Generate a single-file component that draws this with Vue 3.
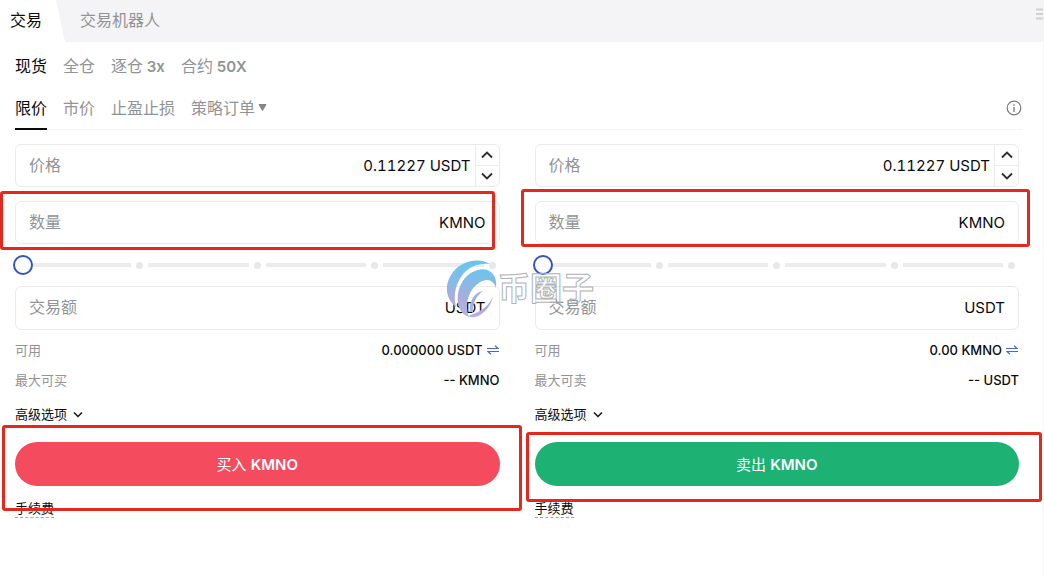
<script setup>
import { ref } from 'vue'

const panels = [
  { id: 'buy', available: '0.000000 USDT', maxLabel: '最大可买', max: '-- KMNO', action: '买入' },
  { id: 'sell', available: '0.00 KMNO', maxLabel: '最大可卖', max: '-- USDT', action: '卖出' },
]
const markets = [
  { name: '现货' },
  { name: '全仓' },
  { name: '逐仓', level: '3x' },
  { name: '合约', level: '50X' },
]
const orders = ['限价', '市价', '止盈止损']
const prices = ref({ buy: '0.11227', sell: '0.11227' })
const ratio = ref({ buy: 0, sell: 0 })
</script>

<template>
  <div class="page">
    <header class="topbar">
      <button class="top-tab current">交易</button>
      <svg class="slant" viewBox="0 0 10 42" aria-hidden="true"><path d="M0 0 8 38Q9 41 10 42H0Z" fill="#fff" /></svg>
      <button class="top-tab">交易机器人</button>
      <svg class="grip" viewBox="0 0 7 12" aria-hidden="true"><path d="M0 1.500h7M0 6h7M0 10.500h7" stroke="#d0d1d4" stroke-width="2" /></svg>
    </header>

    <main class="body">
      <nav class="markets">
        <button v-for="(m, i) in markets" :key="m.name" class="link" :class="{ on: i === 0 }">{{ m.name }}<b v-if="m.level">&nbsp;{{ m.level }}</b></button>
      </nav>
      <nav class="orders">
        <button v-for="(o, i) in orders" :key="o" class="link order" :class="{ on: i === 0 }">{{ o }}</button>
        <button class="link order strategy">策略订单
          <svg class="caret" viewBox="0 0 9 7" aria-hidden="true"><path d="M1 .5h7L4.500 6.500Z" fill="#858689" stroke="#858689" stroke-linejoin="round" /></svg>
        </button>
        <button class="info" aria-label="说明">
          <svg viewBox="0 0 16 16" width="16" height="16" aria-hidden="true"><circle cx="8" cy="8" r="6.800" fill="none" stroke="#77787b" stroke-width="1.200" /><path d="M8 7v5M8 4.300v1.400" stroke="#77787b" stroke-width="1.300" /></svg>
        </button>
      </nav>

      <div class="panels">
        <form v-for="p in panels" :key="p.id" class="panel" :class="p.id" @submit.prevent>
          <div class="field price">
            <label :for="p.id + '-price'">价格</label>
            <input :id="p.id + '-price'" v-model="prices[p.id]" class="number">
            <span class="unit">USDT</span>
            <div class="stepper">
              <button type="button" aria-label="增加"><svg viewBox="0 0 12 8" aria-hidden="true"><path d="M1 6.500 6 1.500l5 5" /></svg></button>
              <button type="button" aria-label="减少"><svg viewBox="0 0 12 8" aria-hidden="true"><path d="m1 1.500 5 5 5-5" /></svg></button>
            </div>
          </div>

          <div class="marked">
            <div class="field">
              <label :for="p.id + '-qty'">数量</label>
              <input :id="p.id + '-qty'" class="number">
              <span class="unit">KMNO</span>
            </div>
            <span class="mark mark-qty"></span>
          </div>

          <div class="slider">
            <div class="track" aria-hidden="true">
              <template v-for="n in 4" :key="n"><i class="bar"></i><i class="dot"></i></template>
            </div>
            <input v-model="ratio[p.id]" type="range" min="0" max="100" aria-label="比例">
          </div>

          <div class="field total">
            <label :for="p.id + '-total'">交易额</label>
            <input :id="p.id + '-total'" class="number">
            <span class="unit">USDT</span>
          </div>

          <div class="rows">
            <div class="row">
              <span class="name">可用</span>
              <span class="value">{{ p.available }}</span>
              <button type="button" class="swap" aria-label="划转">
                <svg viewBox="0 0 12 10" aria-hidden="true"><path d="M0 3.500h11L8 .8M12 6.500H1L4 9.200" fill="none" stroke="#4a6cc8" stroke-width="1.200" /></svg>
              </button>
            </div>
            <div class="row">
              <span class="name">{{ p.maxLabel }}</span>
              <span class="value">{{ p.max }}</span>
            </div>
          </div>

          <button type="button" class="advanced">高级选项
            <svg viewBox="0 0 10 7" aria-hidden="true"><path d="m1 1.500 4 4 4-4" fill="none" stroke="#111" stroke-width="1.500" /></svg>
          </button>

          <div class="marked">
            <button class="submit">{{ p.action }} <b>KMNO</b></button>
            <span class="mark mark-submit"></span>
          </div>
          <a class="fee" href="#">手续费</a>
        </form>

        <div class="watermark">
          <svg viewBox="0 0 52 58" aria-hidden="true">
            <defs><linearGradient id="wm" gradientUnits="userSpaceOnUse" x1="30" y1="0" x2="22" y2="58"><stop offset="0" stop-color="#62c8ef" /><stop offset=".4" stop-color="#86bbe5" /><stop offset=".65" stop-color="#a6aedb" /><stop offset="1" stop-color="#bcb0dd" /></linearGradient></defs>
            <g fill="url(#wm)">
              <path d="M44 4C32-3 16 1 7 12C-3 25 0 39 10 47C6 32 12 16 24 8Q33 3 44 4Z" />
              <path d="M50 28C52 15 43 7 32 10C18 13 10 29 12 43C13 50 17 55 23 57C18 44 23 29 34 22Q46 16 50 28Z" />
              <path d="M37 31C27 33 23 43 24 51L27 53C26 44 30 36 37 31Z" />
              <path d="M47 36C44 45 35 52 22 56Q25 58 29 57C38 55 45 46 47 36Z" />
            </g>
          </svg>
          <span>币圈子</span>
        </div>
      </div>
    </main>
  </div>
</template>

<style>
body { background: #fff; }
</style>

<style scoped>
.page {
  min-height: 100vh;
  box-sizing: border-box;
  border-right: 1px solid #f4f4f6;
  overflow: hidden;
  background: #fff;
  color: #0b0b0c;
  font-family: Inter, "Noto Sans CJK SC", sans-serif;
  font-size: 16px;
}
button, input { font: inherit; color: inherit; background: none; border: 0; padding: 0; margin: 0; }
button { cursor: pointer; white-space: nowrap; }
svg { display: block; }

.topbar { display: flex; align-items: center; height: 42px; background: #f4f4f7; }
.top-tab { height: 42px; color: #929396; padding: 0 14px 4px; }
.top-tab.current { background: #fff; color: #0b0b0c; padding: 0 14px 4px 10px; }
.slant { width: 10px; height: 42px; }
.grip { width: 7px; height: 12px; margin-left: auto; margin-bottom: 14px; }

.body { padding: 0 24px 0 15px; }
.markets { display: flex; align-items: center; gap: 16px; height: 45px; }
.markets b { font-size: 15px; font-weight: 600; }
.orders { display: flex; align-items: center; gap: 16px; height: 42px; border-bottom: 1px solid #f4f4f6; margin-right: -3px; }
.link { color: #929396; }
.link.on { color: #0b0b0c; }
.order { height: 42px; border-bottom: 2px solid transparent; box-sizing: content-box; }
.order.on { border-color: #0b0b0c; }
.strategy { display: flex; align-items: center; gap: 3px; }
.caret { width: 9px; height: 7px; }
.info { margin-left: auto; }

.panels { position: relative; display: grid; grid-template-columns: 1fr 1fr; gap: 35px; padding-top: 14px; }
.panel { min-width: 0; }
.field { display: flex; align-items: center; height: 43px; box-sizing: border-box; border: 1px solid #ebebee; border-radius: 6px; padding: 0 13px; line-height: 20px; }
.field label { color: #929396; white-space: nowrap; padding-bottom: 2px; }
.number { flex: 1; min-width: 0; text-align: right; outline: 0; padding: 0 4px 0 0; font-size: 15px; font-variant-numeric: tabular-nums; }
.unit { font-size: 15px; }
.field.price { padding-right: 0; margin-bottom: 14px; }
.total { height: 44px; }
.stepper { align-self: stretch; display: flex; flex-direction: column; width: 23px; margin-left: 4px; border-left: 1px solid #ebebee; }
.stepper button { flex: 1; display: grid; place-items: center; }
.stepper button + button { border-top: 1px solid #ebebee; }
.stepper svg { width: 12px; height: 8px; fill: none; stroke: #2b2c2f; stroke-width: 1.800; }

.marked { position: relative; }
.mark { position: absolute; border: 3px solid #e3281e; border-radius: 3px; pointer-events: none; }
.buy .mark-qty { inset: -10px 5px -6px -15px; }
.sell .mark-qty { inset: -12px -11px -3px -14px; }
.buy .mark-submit { inset: -17px -22px -25px -13px; }
.sell .mark-submit { inset: -10px -23px -16px -9px; }

.slider { position: relative; height: 42px; display: grid; align-items: center; }
.slider > * { grid-area: 1 / 1; }
.track { display: flex; align-items: center; gap: 5px; padding: 0 4px 0 16px; }
.bar { flex: 1; height: 4px; background: #ececef; }
.dot { width: 7px; height: 7px; border-radius: 50%; background: #e8e8eb; }
.slider input { appearance: none; width: 100%; height: 20px; margin: 0 0 0 -2px; }
.slider input::-webkit-slider-thumb { appearance: none; box-sizing: border-box; width: 20px; height: 20px; border: 2px solid #3354c0; border-radius: 50%; background: #fff; }

.rows { display: grid; gap: 10px; padding-top: 10px; font-size: 13px; line-height: 20px; }
.row { display: flex; align-items: center; }
.name { color: #929396; margin-right: auto; }
.value { font-weight: 500; }
.swap { margin: 0 1px 0 4px; }
.swap svg { width: 12px; height: 10px; }
.advanced { display: flex; align-items: center; gap: 6px; margin: 14px 0 18px; font-size: 13px; line-height: 20px; }
.advanced svg { width: 10px; height: 7px; }
.submit { display: block; width: 100%; height: 44px; border-radius: 22px; color: #fff; font-size: 15px; padding-bottom: 2px; }
.submit b { font-weight: 600; }
.buy .submit { background: #f44b5f; }
.sell .submit { background: #1db274; }
.fee { display: inline-block; margin-top: 14px; color: inherit; font-size: 13px; line-height: 17px; text-decoration: none; border-bottom: 1px dashed #a4a5a8; }

.watermark { position: absolute; left: 0; right: 0; top: 130px; display: flex; align-items: center; justify-content: center; padding-left: 6px; pointer-events: none; }
.watermark svg { width: 52px; height: 58px; }
.watermark span { font-size: 32px; line-height: 40px; font-weight: 700; color: transparent; -webkit-text-stroke: 1px #b2b3b6; }
</style>
